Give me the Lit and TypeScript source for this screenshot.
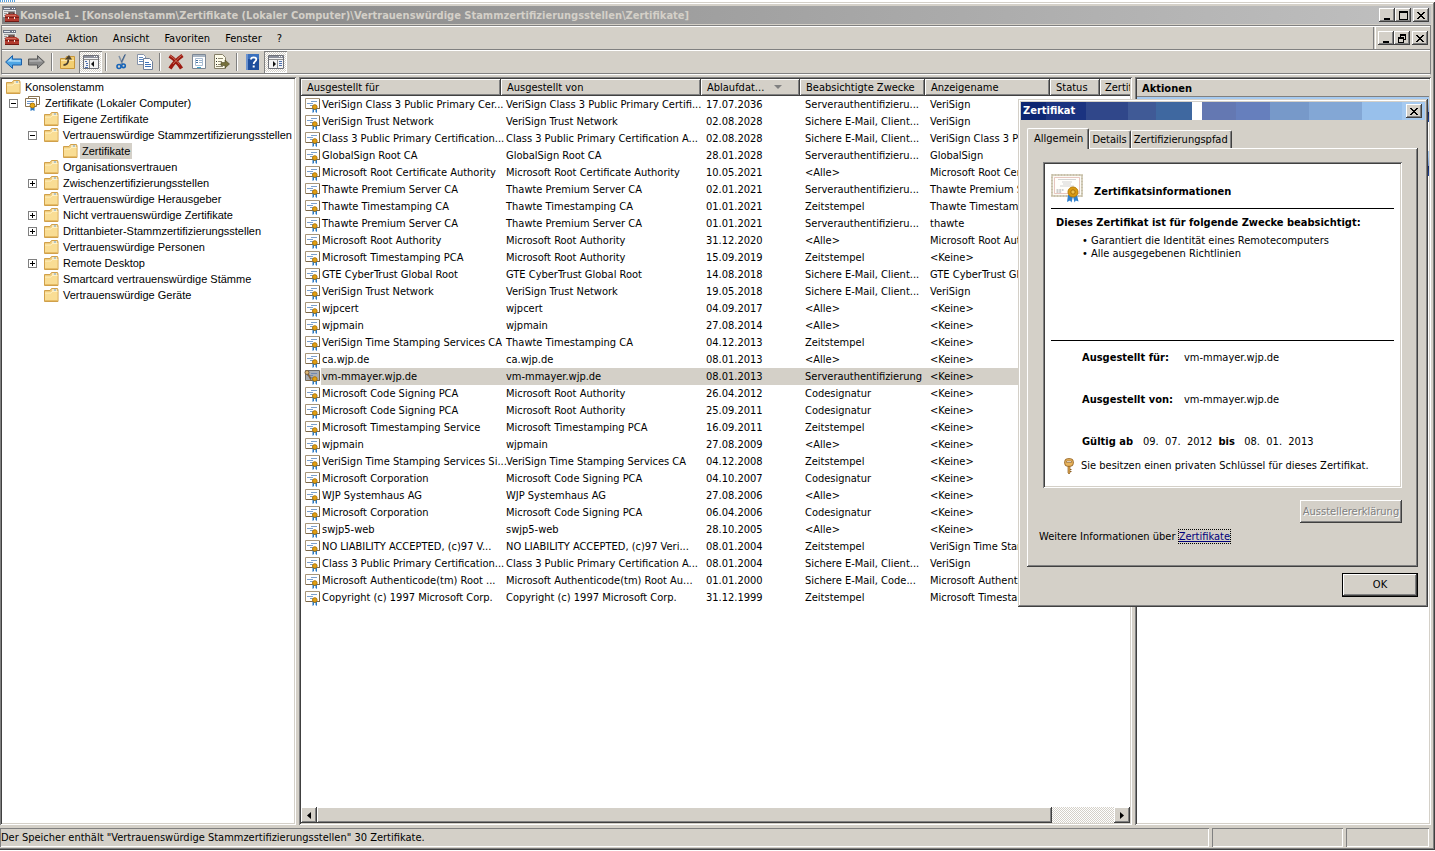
import { LitElement, html, css, svg, nothing } from "lit";
import { customElement } from "lit/decorators.js";
import { classMap } from "lit/directives/class-map.js";

const base = css`
  * { box-sizing: border-box; }
  button, a, ul, dl, dd, dt, h2, h3, p { margin: 0; padding: 0; font: inherit; color: inherit; }
  button { background: #d4d0c8; border: 0; border-radius: 0; display: flex; align-items: center; justify-content: center; white-space: nowrap; }
  svg { display: block; flex: none; }
  .raised { box-shadow: inset -1px -1px #404040, inset 1px 1px #fff, inset -2px -2px #808080; }
`;

const box = (w: number, h: number, body: unknown) =>
  html`<svg width=${w} height=${h} viewBox="0 0 ${w} ${h}" aria-hidden="true">${body}</svg>`;

const icons = {
  console: () => box(16, 16, svg`
    <path d="M0 0h13v10H0z" fill="#e4e4e4"/><path d="M0 0h13v3H0z" fill="#6d7484"/><path d="M1 1h6v1H1z" fill="#dfe5ee"/>
    <path d="M9 1h1v1H9zM11 1h1v1h-1z" fill="#fff"/><path d="M1 4h11v1H1zM1 6h3v1H1zM1 8h2v1H1z" fill="#9a9a9a"/>
    <path d="M6 8V6h5v2" fill="none" stroke="#4b2520" stroke-width="1.4"/>
    <path d="M2 9q0-2 2-2h9l3 2v6H2z" fill="#b13a2e"/><path d="M2 10h14v1H2z" fill="#7a1c16"/><path d="M3 8h10v1H3z" fill="#d4705f"/>
    <path d="M5 10h1v2H5zM11 10h1v2h-1z" fill="#f1e6dd"/><path d="M2 14h14v1H2z" fill="#701a14"/>`),
  back: () => box(17, 14, svg`<path d="M.6 7 7.500 .6V4h9v6h-9v3.400z" fill="#4fa6e4" stroke="#1c5fa8"/><path d="M2.500 6.600 6.500 2.900V5.200h9v1.600z" fill="#b6e2fb"/>`),
  forward: () => box(17, 14, svg`<path d="M16.400 7 9.500 .6V4h-9v6h9v3.400z" fill="#8a8a8a" stroke="#5a5a5a"/><path d="M14.500 6.600 10.500 2.900v2.300h-9v1.600z" fill="#b5b5b5"/>`),
  up: () => box(16, 16, svg`<path d="M.5 4.500h5l1-2h8v12H.5z" fill="#f3cf72" stroke="#c8963a"/><path d="M1 6h13v1H1z" fill="#fbe7ad"/>
    <path d="M3.500 11c3 0 5-2 4.800-5.500" fill="none" stroke="#4a4030" stroke-width="1.800"/><path d="M4.800 5.600 9 1l3 4.600z" fill="#4a4030"/>`),
  tree: () => box(16, 14, svg`<path d="M.5.500h15v13H.5z" fill="#f4f4f4" stroke="#6e7078"/><path d="M1 1h14v2H1z" fill="#8b8f9b"/><path d="M11 1h1v1h-1zM13 1h1v1h-1z" fill="#fff"/>
    <path d="M1 4h14v1H1z" fill="#8d8d8d"/><path d="M6 5h1v8H6z" fill="#8d8d8d"/><path d="M2 6h2v1H2zM3 8h2v1H3zM3 10h2v1H3zM2 12h3v1H2z" fill="#4d6fae"/><path d="M11 6v6L8 9z" fill="#111"/>`),
  cut: () => box(14, 16, svg`<path d="M10.500 0 6 10M4 2l3.500 8" stroke="#7d8fa5" stroke-width="1.500" fill="none"/><path d="M9.800 1 6.500 8" stroke="#3e5f88" fill="none"/>
    <circle cx="4" cy="12.500" r="2" fill="none" stroke="#1664b8" stroke-width="1.600"/><circle cx="8.500" cy="11.800" r="1.800" fill="none" stroke="#1664b8" stroke-width="1.600"/>`),
  copy: () => box(16, 16, svg`<path d="M.5.500h6l2 2v8h-8z" fill="#fff" stroke="#8693a8"/><path d="M2 3h4v1H2zM2 5h4v1H2zM2 7h4v1H2z" fill="#5b86bd"/>
    <path d="M6.500 4.500h6l3 3v8h-9z" fill="#fff" stroke="#6f7f98"/><path d="M8 8h4v1H8zM8 10h6v1H8zM8 12h6v1H8z" fill="#3f73b8"/>`),
  remove: () => box(16, 16, svg`<path d="M1.500 2c4 2.500 8.500 7 12 12.500M14.500 1.500C9.500 5 5 9.500 2 14.500" stroke="#9c1a10" stroke-width="3.600" fill="none"/><path d="M2 1.500c4 3 7 5.500 9.500 9M13.500 1.500C10 4.500 7 7.500 5 10" stroke="#c9705a" fill="none"/>`),
  props: () => box(16, 16, svg`<path d="M1.500.500h13v14h-13z" fill="#fff" stroke="#7c8794"/><path d="M2 1h12v2H2z" fill="#a9b5c2"/><path d="M4.500 4.500h7v7h-7z" fill="none" stroke="#a9bdd2"/>
    <path d="M5 6h2v1H5zM5 8h2v1H5z" fill="#44719f"/><path d="M8 6h3v1H8zM8 8h3v1H8z" fill="#9cb4cb"/><path d="M6 13h4v1H6z" fill="#3fa7cf"/>`),
  exportList: () => box(16, 16, svg`<path d="M.5.500h8l3 3v11H.5z" fill="#fdfbe9" stroke="#857f68"/><path d="M2 4h1v1H2zM2 7h1v1H2zM2 10h1v1H2z" fill="#333"/><path d="M4 4h5v1H4zM4 7h4v1H4zM4 10h4v1H4zM2 12h7v1H2z" fill="#8c8770"/>
    <path d="M7 8.500h4V6l4.500 4-4.500 4v-2.500H7z" fill="#76703c" stroke="#4b4722" stroke-width=".6"/>`),
  help: () => box(14, 16, svg`<path d="M0 0h13v16H0z" fill="#1e4e9c"/><path d="M0 0h2v16H0z" fill="#6c93cf"/><path d="M2 0h11v5H2z" fill="#3a70bd"/>
    <path d="M5 5.500C5 2.500 10.300 2.600 10.300 5.400 10.300 7.400 7.700 7.400 7.700 10" fill="none" stroke="#fff" stroke-width="1.800"/><path d="M6.700 11.500h2v2h-2z" fill="#fff"/>`),
  pane: () => box(16, 14, svg`<path d="M.5.500h15v13H.5z" fill="#f4f4f4" stroke="#6e7078"/><path d="M1 1h14v2H1z" fill="#8b8f9b"/><path d="M11 1h1v1h-1zM13 1h1v1h-1z" fill="#fff"/>
    <path d="M1 4h14v1H1z" fill="#8d8d8d"/><path d="M9 5h1v8H9z" fill="#8d8d8d"/><path d="M11 6h3v1h-3zM11 8h3v1h-3zM11 10h3v1h-3z" fill="#4d6fae"/><path d="M5 6v6l3-3z" fill="#111"/>`),
  folder: () => box(15, 14, svg`<path d="M.5 2.500 6 2.500 7.500.500h6l.500 1.500v11.500H.5z" fill="#f0cd7c" stroke="#d0a04a"/><path d="M8 1.500h5v1H8z" fill="#fff"/><path d="M10 1.500h2v1h-2z" fill="#6aa3cf"/>
    <path d="M1 5h6l1-1.500h5.500V13H1z" fill="#f9dd94"/><path d="M1 5h6l1-1.500h5.500" fill="none" stroke="#fff1c4"/><path d="M1 12h13v1H1z" fill="#e6bc66"/>`),
  store: () => box(16, 15, svg`<path d="M3.500.500h11v8h-11z" fill="#fff" stroke="#8a7350"/><path d="M.5 2.500h11v8H.5z" fill="#fff" stroke="#8a7350"/><path d="M2 5h7v1H2zM2 7h5v1H2z" fill="#6d94c6"/>
    <path d="M5.500 11v4l2-1 2 1v-4z" fill="#2d7ac4"/><circle cx="7.500" cy="9.500" r="2.400" fill="#e6a817" stroke="#b07806"/>`),
  cert: (sel = false) => box(17, 15, svg`<path d="M1.500 .5h14v10h-14z" fill=${sel ? "#a9adb4" : "#fff"} stroke=${sel ? "#6b6a68" : "#a8967a"}/><path d="M15.500 1v10M2 10.500h13" stroke="#7b6748"/>
    <path d="M7 3h6v1H7zM3 5h6v1H3zM6 7h3v1H6z" fill=${sel ? "#7088b0" : "#7ba0cd"}/>
    <path d="M8.500 10v5l1.500-1V12h1.500v2l1.500 1v-5z" fill="#2877c2"/><circle cx="10.800" cy="9" r="2.300" fill="#e2a013" stroke="#b07606"/>
    ${sel ? svg`<circle cx="3" cy="2.500" r="2" fill="#ddb878" stroke="#80603a"/><path d="M4 4l3 5.500" stroke="#80603a" stroke-width="1.600"/>` : nothing}`),
  bigCert: () => box(33, 30, svg`<path d="M1 1h30v21H1z" fill="#fbfaf6" stroke="#d6d0bd" stroke-width="2"/><path d="M1 1h30v21H1z" fill="none" stroke="#b9b199" stroke-width="1" stroke-dasharray="1 2"/><path d="M3.500 3.500h25v16h-25z" fill="#fffefb" stroke="#dcb0a8" stroke-width=".7"/>
    <path d="M7 5.500h18M11 8h10M12 10h8M9 12h14" stroke="#c8c8c8" stroke-width=".8"/><path d="M5.500 16h7M5.500 18h5" stroke="#9e9e9e" stroke-dasharray="2 .7"/>
    <path d="M17 21l-1 7 3-1.500 1.500 2 1.500-6 1.500 6 1.300-2 2.700 1-1.500-6.500z" fill="#2f7fcb"/><circle cx="22" cy="18" r="5" fill="#d99a12" stroke="#b87c08"/><circle cx="22" cy="18" r="2.200" fill="#efc04b" stroke="#a86e06"/>`),
  key: () => box(10, 16, svg`<path d="M4 8h2v7l-1 1-1-1z" fill="#e0a850" stroke="#8d5f22" stroke-width=".7"/><path d="M6 11h1.500v1H6zM6 13h1.500v1H6z" fill="#8d5f22"/>
    <rect x=".7" y=".7" width="8.600" height="7.600" rx="3" fill="#e9b45c" stroke="#9a6a2b"/><path d="M2.500 3h5v1.500h-5z" fill="#fff" stroke="#9a6a2b" stroke-width=".7"/>`),
  min: () => box(9, 9, svg`<path d="M1 7h6v2H1z"/>`),
  max: () => box(9, 9, svg`<path d="M0 0h9v9H0zM1 2v6h7V2z" fill-rule="evenodd"/>`),
  restore: () => box(9, 9, svg`<path d="M2 0h6v6H6V5h1V2H3v1H2zM0 3h6v6H0zM1 5v3h4V5z" fill-rule="evenodd"/>`),
  close: () => box(8, 7, svg`<path d="M0 0h2v1H0zM6 0h2v1H6zM1 1h2v1H1zM5 1h2v1H5zM2 2h4v1H2zM3 3h2v1H3zM2 4h4v1H2zM1 5h2v1H1zM5 5h2v1H5zM0 6h2v1H0zM6 6h2v1H6z"/>`),
};

interface Node { level: number; label: string; box?: "+" | "-"; store?: boolean; selected?: boolean; }
const TREE: Node[] = [
  { level: 0, label: "Konsolenstamm" },
  { level: 1, label: "Zertifikate (Lokaler Computer)", box: "-", store: true },
  { level: 2, label: "Eigene Zertifikate" },
  { level: 2, label: "Vertrauenswürdige Stammzertifizierungsstellen", box: "-" },
  { level: 3, label: "Zertifikate", selected: true },
  { level: 2, label: "Organisationsvertrauen" },
  { level: 2, label: "Zwischenzertifizierungsstellen", box: "+" },
  { level: 2, label: "Vertrauenswürdige Herausgeber" },
  { level: 2, label: "Nicht vertrauenswürdige Zertifikate", box: "+" },
  { level: 2, label: "Drittanbieter-Stammzertifizierungsstellen", box: "+" },
  { level: 2, label: "Vertrauenswürdige Personen" },
  { level: 2, label: "Remote Desktop", box: "+" },
  { level: 2, label: "Smartcard vertrauenswürdige Stämme" },
  { level: 2, label: "Vertrauenswürdige Geräte" },
];

const ROWS: string[][] = [
  ["VeriSign Class 3 Public Primary Cer...", "VeriSign Class 3 Public Primary Certifi...", "17.07.2036", "Serverauthentifizieru...", "VeriSign"],
  ["VeriSign Trust Network", "VeriSign Trust Network", "02.08.2028", "Sichere E-Mail, Client...", "VeriSign"],
  ["Class 3 Public Primary Certification...", "Class 3 Public Primary Certification A...", "02.08.2028", "Sichere E-Mail, Client...", "VeriSign Class 3 Pu..."],
  ["GlobalSign Root CA", "GlobalSign Root CA", "28.01.2028", "Serverauthentifizieru...", "GlobalSign"],
  ["Microsoft Root Certificate Authority", "Microsoft Root Certificate Authority", "10.05.2021", "<Alle>", "Microsoft Root Cert..."],
  ["Thawte Premium Server CA", "Thawte Premium Server CA", "02.01.2021", "Serverauthentifizieru...", "Thawte Premium Se..."],
  ["Thawte Timestamping CA", "Thawte Timestamping CA", "01.01.2021", "Zeitstempel", "Thawte Timestampi..."],
  ["Thawte Premium Server CA", "Thawte Premium Server CA", "01.01.2021", "Serverauthentifizieru...", "thawte"],
  ["Microsoft Root Authority", "Microsoft Root Authority", "31.12.2020", "<Alle>", "Microsoft Root Aut..."],
  ["Microsoft Timestamping PCA", "Microsoft Root Authority", "15.09.2019", "Zeitstempel", "<Keine>"],
  ["GTE CyberTrust Global Root", "GTE CyberTrust Global Root", "14.08.2018", "Sichere E-Mail, Client...", "GTE CyberTrust Glo..."],
  ["VeriSign Trust Network", "VeriSign Trust Network", "19.05.2018", "Sichere E-Mail, Client...", "VeriSign"],
  ["wjpcert", "wjpcert", "04.09.2017", "<Alle>", "<Keine>"],
  ["wjpmain", "wjpmain", "27.08.2014", "<Alle>", "<Keine>"],
  ["VeriSign Time Stamping Services CA", "Thawte Timestamping CA", "04.12.2013", "Zeitstempel", "<Keine>"],
  ["ca.wjp.de", "ca.wjp.de", "08.01.2013", "<Alle>", "<Keine>"],
  ["vm-mmayer.wjp.de", "vm-mmayer.wjp.de", "08.01.2013", "Serverauthentifizierung", "<Keine>"],
  ["Microsoft Code Signing PCA", "Microsoft Root Authority", "26.04.2012", "Codesignatur", "<Keine>"],
  ["Microsoft Code Signing PCA", "Microsoft Root Authority", "25.09.2011", "Codesignatur", "<Keine>"],
  ["Microsoft Timestamping Service", "Microsoft Timestamping PCA", "16.09.2011", "Zeitstempel", "<Keine>"],
  ["wjpmain", "wjpmain", "27.08.2009", "<Alle>", "<Keine>"],
  ["VeriSign Time Stamping Services Si...", "VeriSign Time Stamping Services CA", "04.12.2008", "Zeitstempel", "<Keine>"],
  ["Microsoft Corporation", "Microsoft Code Signing PCA", "04.10.2007", "Codesignatur", "<Keine>"],
  ["WJP Systemhaus AG", "WJP Systemhaus AG", "27.08.2006", "<Alle>", "<Keine>"],
  ["Microsoft Corporation", "Microsoft Code Signing PCA", "06.04.2006", "Codesignatur", "<Keine>"],
  ["swjp5-web", "swjp5-web", "28.10.2005", "<Alle>", "<Keine>"],
  ["NO LIABILITY ACCEPTED, (c)97 V...", "NO LIABILITY ACCEPTED, (c)97 Veri...", "08.01.2004", "Zeitstempel", "VeriSign Time Stam..."],
  ["Class 3 Public Primary Certification...", "Class 3 Public Primary Certification A...", "08.01.2004", "Sichere E-Mail, Client...", "VeriSign"],
  ["Microsoft Authenticode(tm) Root ...", "Microsoft Authenticode(tm) Root Au...", "01.01.2000", "Sichere E-Mail, Code...", "Microsoft Authentic..."],
  ["Copyright (c) 1997 Microsoft Corp.", "Copyright (c) 1997 Microsoft Corp.", "31.12.1999", "Zeitstempel", "Microsoft Timestam..."],
];
const SELECTED = 16;

@customElement("console-tree")
export class ConsoleTree extends LitElement {
  static styles = [base, css`
    :host { display: block; font-family: "Liberation Sans", Arial, sans-serif; }
    .row { display: flex; align-items: center; height: 16px; white-space: nowrap; }
    .l0 { padding-left: 4px; } .l1 { padding-left: 7px; } .l2 { padding-left: 26px; } .l3 { padding-left: 61px; }
    .slot { width: 16px; display: flex; }
    .exp { width: 9px; height: 9px; border: 1px solid #808080; background: #fff; }
    .label { margin-left: 2px; padding: 0 2px; line-height: 16px; }
    .selected { background: #d4d0c8; }
  `];
  render() {
    return html`<div role="tree" aria-label="Konsolenstruktur">${TREE.map((n) => html`
      <div class="row l${n.level}" role="treeitem" aria-selected=${n.selected ? "true" : "false"}>
        ${n.level === 1 || n.level === 2 ? html`<span class="slot">${n.box ? html`<button class="exp" aria-label=${n.box === "+" ? "Erweitern" : "Reduzieren"}>
          ${box(7, 7, svg`<path d=${n.box === "+" ? "M1 3h5v1H1zM3 1h1v5H3z" : "M1 3h5v1H1z"}/>`)}</button>` : nothing}</span>` : nothing}
        ${n.store ? icons.store() : icons.folder()}
        <span class="label ${classMap({ selected: !!n.selected })}">${n.label}</span>
      </div>`)}</div>`;
  }
}

@customElement("cert-list")
export class CertList extends LitElement {
  static styles = [base, css`
    :host { display: flex; flex-direction: column; height: 100%; }
    .view { flex: 1; overflow: hidden; }
    table { border-collapse: separate; border-spacing: 0; table-layout: fixed; width: 829px; }
    .c1 { width: 200px; } .c2 { width: 200px; } .c3 { width: 99px; } .c4 { width: 125px; } .c5 { width: 125px; } .c6 { width: 50px; } .c7 { width: 30px; }
    th, td { height: 17px; padding: 0 0 0 5px; line-height: 17px; text-align: left; font-weight: normal; white-space: nowrap; }
    th { background: #d4d0c8; padding-left: 6px; box-shadow: inset -1px -1px #404040, inset 1px 1px #fff, inset -2px -2px #808080; }
    th:last-child { padding-left: 5px; box-shadow: inset 0 -1px #404040, inset 1px 1px #fff, inset 0 -2px #808080; }
    .sort { display: inline-block; margin-left: 10px; border: 4px solid transparent; border-top-color: #808080; border-bottom: 0; vertical-align: 2px; }
    td:first-child { padding-left: 3px; }
    .name { display: flex; align-items: flex-end; height: 17px; }
    .name span { flex: 1; min-width: 0; padding-left: 1px; height: 17px; }
    .sel td { background: #d4d0c8; }
    .sel td:first-child { background: #fff; }
    .sel .name span { background: #d4d0c8; }
    .bar { display: flex; height: 16px; background: repeating-conic-gradient(#fff 0 25%, #d4d0c8 0 50%) 0 0 / 2px 2px; }
    .arrow { width: 16px; }
    .thumb { width: 735px; background: #d4d0c8; }
    .space { flex: 1; }
  `];
  render() {
    return html`
      <div class="view"><table>
        <colgroup>${[1, 2, 3, 4, 5, 6, 7].map((c) => html`<col class="c${c}">`)}</colgroup>
        <thead><tr><th>Ausgestellt für</th><th>Ausgestellt von</th><th>Ablaufdat...<span class="sort"></span></th><th>Beabsichtigte Zwecke</th><th>Anzeigename</th><th>Status</th><th>Zertif</th></tr></thead>
        <tbody>${ROWS.map((r, i) => html`<tr class=${classMap({ sel: i === SELECTED })}>
          <td><div class="name">${icons.cert(i === SELECTED)}<span>${r[0]}</span></div></td>
          ${r.slice(1).map((c) => html`<td>${c}</td>`)}<td></td><td></td></tr>`)}</tbody>
      </table></div>
      <div class="bar">
        <button class="arrow raised" aria-label="Nach links">${box(4, 7, svg`<path d="M4 0v7L0 3.500z"/>`)}</button>
        <div class="thumb raised"></div><div class="space"></div>
        <button class="arrow raised" aria-label="Nach rechts">${box(4, 7, svg`<path d="M0 0v7l4-3.500z"/>`)}</button>
      </div>`;
  }
}

@customElement("cert-dialog")
export class CertDialog extends LitElement {
  static styles = [base, css`
    :host { display: block; background: #d4d0c8; padding: 3px; box-shadow: inset -1px -1px #404040, inset 1px 1px #d4d0c8, inset -2px -2px #808080, inset 2px 2px #fff; }
    .title { display: flex; align-items: center; justify-content: space-between; height: 18px; padding: 0 3px 0 2px; color: #fff; font-weight: bold; line-height: 16px;
      background: linear-gradient(90deg, #0d2672 0 25px, #1b3380 25px 65px, #30478a 65px 107px, #405a96 107px 135px, #3f68a0 135px 171px, #fff 171px 181px, #6478b2 181px 215px, #667fbd 215px 249px, #7799c9 249px 288px, #83a7d5 288px 341px, #98c0eb 341px 381px, #a6caf0 381px); }
    .x { width: 16px; height: 14px; color: #000; }
    .body { padding: 8px 7px 7px 6px; }
    .tabs { display: flex; align-items: flex-end; }
    .tab { height: 18px; padding: 1px 3px 0 2px; border-top: 1px solid #fff; border-left: 1px solid #fff; border-right: 1px solid #404040; border-radius: 2px 2px 0 0; box-shadow: inset -1px 0 #808080; }
    .tab.on { height: 21px; padding: 0 5px 0 6px; margin-bottom: -1px; position: relative; }
    .panel { height: 419px; padding: 14px 16px 0; box-shadow: inset -1px -1px #404040, inset 1px 1px #fff, inset -2px -2px #808080; }
    .sheet { background: #fff; height: 326px; padding: 2px 8px; box-shadow: inset 1px 1px #808080, inset -1px -1px #fff, inset 2px 2px #404040, inset -2px -2px #d4d0c8; }
    .head { display: flex; gap: 10px; height: 45px; padding-top: 10px; border-bottom: 1px solid #000; }
    h2 { font-weight: bold; line-height: 36px; }
    .purposes { height: 132px; padding: 7px 0 0 5px; border-bottom: 1px solid #000; }
    h3 { font-weight: bold; line-height: 14px; white-space: nowrap; }
    ul { list-style: none; padding: 4px 0 0 26px; line-height: 13px; }
    dl { padding: 10px 0 0 31px; line-height: 14px; }
    dl div { display: flex; height: 42px; }
    dl .valid { height: 23px; gap: 10px; white-space: pre; }
    dt { width: 102px; font-weight: bold; }
    .valid dt, .valid b { width: auto; }
    .key { display: flex; align-items: center; gap: 7px; padding-left: 13px; white-space: nowrap; }
    .statement { display: flex; justify-content: flex-end; padding-top: 12px; }
    .statement button { width: 102px; height: 23px; color: #808080; text-shadow: 1px 1px #fff; }
    .more { padding: 7px 0 0; margin-left: -4px; line-height: 14px; }
    a { color: #00007b; text-decoration: underline; outline: 1px dotted #000; }
    .actions { display: flex; justify-content: flex-end; padding-top: 6px; }
    .ok { width: 76px; height: 24px; border: 1px solid #000; }
  `];
  render() {
    return html`
      <div class="title"><span>Zertifikat</span><button class="x raised" aria-label="Schließen">${icons.close()}</button></div>
      <div class="body">
        <div class="tabs" role="tablist">
          <button class="tab on" role="tab" aria-selected="true">Allgemein</button>
          <button class="tab" role="tab">Details</button>
          <button class="tab" role="tab">Zertifizierungspfad</button>
        </div>
        <div class="panel">
          <div class="sheet">
            <div class="head">${icons.bigCert()}<h2>Zertifikatsinformationen</h2></div>
            <div class="purposes"><h3>Dieses Zertifikat ist für folgende Zwecke beabsichtigt:</h3>
              <ul><li>• Garantiert die Identität eines Remotecomputers</li><li>• Alle ausgegebenen Richtlinien</li></ul></div>
            <dl>
              <div><dt>Ausgestellt für:</dt><dd>vm-mmayer.wjp.de</dd></div>
              <div><dt>Ausgestellt von:</dt><dd>vm-mmayer.wjp.de</dd></div>
              <div class="valid"><dt>Gültig ab</dt><dd>09.  07.  2012  <b>bis</b>   08.  01.  2013</dd></div>
            </dl>
            <p class="key">${icons.key()}<span>Sie besitzen einen privaten Schlüssel für dieses Zertifikat.</span></p>
          </div>
          <div class="statement"><button class="raised" disabled>Ausstellererklärung</button></div>
          <p class="more">Weitere Informationen über <a href="#zertifikate">Zertifikate</a></p>
        </div>
        <div class="actions"><button class="ok raised">OK</button></div>
      </div>`;
  }
}

@customElement("app-root")
export class AppRoot extends LitElement {
  static styles = [base, css`
    :host { display: flex; flex-direction: column; height: 100vh; position: relative; overflow: hidden; background: #fff; color: #000;
      font: 11px/14px "DejaVu Sans Condensed", Tahoma, "DejaVu Sans", sans-serif; }
    .strip { height: 2px; flex: none; background: repeating-linear-gradient(90deg, #5aa0dc 0 1px, #fff 1px 2px) 0 0 / 15px 2px no-repeat; }
    .window { flex: 1; min-height: 0; display: flex; flex-direction: column; margin-bottom: 1px; background: #d4d0c8; padding-bottom: 3px;
      box-shadow: inset -1px -1px #404040, inset 0 1px #d4d0c8, inset -2px -2px #808080, inset 0 2px #fff; }
    .title { display: flex; align-items: center; height: 18px; margin: 4px 4px 1px 2px; padding: 0 2px 0 1px; color: #d4d0c8; font-weight: bold;
      background: linear-gradient(90deg, #808080, #c0c0c0); white-space: nowrap; line-height: 16px; }
    .title .text { flex: 1; padding: 1px 0 0 1px; }
    .btns { display: flex; color: #000; }
    .btns button { width: 16px; height: 14px; }
    .btns button:last-child { margin-left: 2px; }
    .bands { margin: 0 4px 2px 1px; border: 1px solid #808080; border-bottom-color: #fff; flex: none; }
    .menubar, .toolbar { display: flex; align-items: center; height: 24px; border-top: 1px solid #fff; border-bottom: 1px solid #808080; }
    .menus { display: flex; align-items: center; gap: 15px; flex: 1; height: 22px; padding-left: 1px; border-right: 1px solid #808080; }
    .menus button { padding-top: 1px; }
    .menus button:first-of-type { margin-left: -9px; }
    .mdi { display: flex; align-items: center; margin-left: 1px; padding: 0 2px; height: 22px; border-left: 1px solid #fff; }
    .tb { width: 23px; height: 22px; }
    .tb.on { background: repeating-conic-gradient(#fff 0 25%, #d4d0c8 0 50%) 0 0 / 2px 2px; box-shadow: inset 1px 1px #808080, inset -1px -1px #fff; }
    .sep { width: 2px; height: 18px; margin: 0 3px; border-left: 1px solid #808080; border-right: 1px solid #fff; }
    .main { flex: 1; min-height: 0; display: flex; gap: 3px; margin-right: 4px; }
    .pane { background: #fff; padding: 2px; box-shadow: inset 1px 1px #808080, inset -1px -1px #fff, inset 2px 2px #404040, inset -2px -2px #d4d0c8; overflow: hidden; }
    .left { width: 296px; flex: none; }
    .list { flex: 1; min-width: 0; }
    .right { width: 296px; flex: none; }
    .right h2 { height: 18px; padding-left: 5px; background: #d4d0c8; border-top: 1px solid #fff; border-bottom: 1px solid #808080; font-weight: bold; line-height: 17px; }
    .group { height: 25px; margin-bottom: 29px; background: linear-gradient(#a6caf0 0 20%, #6f90cc 58%, #0a246a 62%, #24479c); }
    .status { display: flex; gap: 3px; margin: 3px 6px 0 0; height: 19px; flex: none; }
    .status div { box-shadow: inset 1px 1px #808080, inset -1px -1px #fff; line-height: 19px; padding-left: 1px; white-space: nowrap; }
    .grow { flex: 1; } .s2 { width: 131px; } .s3 { width: 83px; }
    .dialog { position: absolute; top: 99px; right: 7px; width: 410px; }
  `];
  private tool(icon: unknown, label: string, on = false) {
    return html`<button class="tb ${classMap({ on })}" aria-label=${label}>${icon}</button>`;
  }
  render() {
    const sep = html`<span class="sep"></span>`;
    return html`
      <div class="strip"></div>
      <div class="window">
        <div class="title">${icons.console()}<span class="text">Konsole1 - [Konsolenstamm\\Zertifikate (Lokaler Computer)\\Vertrauenswürdige Stammzertifizierungsstellen\\Zertifikate]</span>
          <span class="btns"><button class="raised" aria-label="Minimieren">${icons.min()}</button><button class="raised" aria-label="Maximieren">${icons.max()}</button><button class="raised" aria-label="Schließen">${icons.close()}</button></span></div>
        <div class="bands">
          <div class="menubar">
            <div class="menus">${icons.console()}${["Datei", "Aktion", "Ansicht", "Favoriten", "Fenster", "?"].map((m) => html`<button>${m}</button>`)}</div>
            <div class="mdi btns"><button class="raised" aria-label="Minimieren">${icons.min()}</button><button class="raised" aria-label="Wiederherstellen">${icons.restore()}</button><button class="raised" aria-label="Schließen">${icons.close()}</button></div>
          </div>
          <div class="toolbar">
            ${this.tool(icons.back(), "Zurück")}${this.tool(icons.forward(), "Vorwärts")}${sep}
            ${this.tool(icons.up(), "Eine Ebene nach oben")}${this.tool(icons.tree(), "Konsolenstruktur", true)}${sep}
            ${this.tool(icons.cut(), "Ausschneiden")}${this.tool(icons.copy(), "Kopieren")}${sep}
            ${this.tool(icons.remove(), "Löschen")}${this.tool(icons.props(), "Eigenschaften")}${this.tool(icons.exportList(), "Liste exportieren")}${sep}
            ${this.tool(icons.help(), "Hilfe")}${this.tool(icons.pane(), "Aktionsbereich", true)}
          </div>
        </div>
        <div class="main">
          <div class="pane left"><console-tree></console-tree></div>
          <div class="pane list"><cert-list></cert-list></div>
          <div class="pane right"><h2>Aktionen</h2><div class="group"></div><div class="group"></div></div>
        </div>
        <div class="status"><div class="grow">Der Speicher enthält "Vertrauenswürdige Stammzertifizierungsstellen" 30 Zertifikate.</div><div class="s2"></div><div class="s3"></div></div>
      </div>
      <cert-dialog class="dialog" role="dialog" aria-label="Zertifikat"></cert-dialog>`;
  }
}
